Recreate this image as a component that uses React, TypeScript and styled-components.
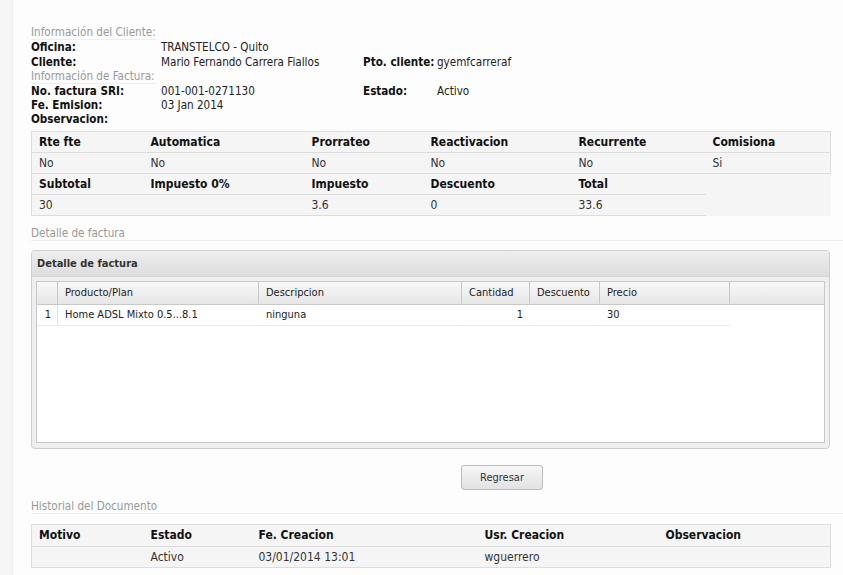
import React from 'react';
import styled, { createGlobalStyle } from 'styled-components';

const GlobalStyle = createGlobalStyle`
  html, body {
    margin: 0;
    padding: 0;
    background: #fdfdfd;
  }
  body {
    font-family: 'DejaVu Sans Condensed', Tahoma, 'DejaVu Sans', sans-serif;
    font-size: 11.6px;
    color: #222;
  }
`;

const Page = styled.div`
  display: flex;
  min-height: 575px;
`;

const SideStrip = styled.div`
  width: 12px;
  flex: none;
  background: #f6f6f6;
  border-right: 1px solid #efefef;
`;

const Content = styled.div`
  flex: 1;
  padding: 25px 0 0 18px;
`;

const SectionLabel = styled.div`
  display: inline-block;
  color: #999;
  line-height: 13.33px;
  border-bottom: 1px solid #eee;
`;

const InfoGrid = styled.div`
  display: grid;
  grid-template-columns: 130px 202px 74px 1fr;
  line-height: 14.2px;
`;

const Label = styled.span`
  font-weight: bold;
  color: #111;
  white-space: nowrap;
`;

const Value = styled.span`
  color: #222;
  white-space: nowrap;
`;

const Legend = styled.div<{ $top: number }>`
  margin-top: ${(p) => p.$top}px;
  color: #999;
  line-height: 14px;
  border-bottom: 1px solid #eee;
`;

const Summary = styled.table`
  width: 799px;
  margin-top: 4px;
  border-collapse: collapse;
  table-layout: fixed;
  background: #f5f5f5;
  border-top: 1px solid #ddd;
  font-size: 12px;
`;

const HeadCell = styled.th<{ $w?: number; $h?: number }>`
  box-sizing: border-box;
  text-align: left;
  font-weight: bold;
  color: #111;
  height: ${(p) => p.$h ?? 21}px;
  padding: 0 0 0 7px;
  white-space: nowrap;
  width: ${(p) => (p.$w ? `${p.$w}px` : 'auto')};
  border-bottom: 1px solid #ddd;
`;

const DataCell = styled.td<{ $bare?: boolean }>`
  box-sizing: border-box;
  color: #333;
  height: 21px;
  padding: 0 0 0 7px;
  border-bottom: ${(p) => (p.$bare ? 'none' : '1px solid #ddd')};
`;

const BorderedRow = styled.tr`
  & > *:first-child {
    border-left: 1px solid #ddd;
  }
  & > *:last-child {
    border-right: 1px solid #ddd;
  }
`;

const LeftRow = styled.tr`
  & > *:first-child {
    border-left: 1px solid #ddd;
  }
`;

const Panel = styled.div`
  width: 797px;
  margin-top: 9px;
  border: 1px solid #cfcfcf;
  border-radius: 4px;
  background: #efefef;
  overflow: hidden;
`;

const PanelHeader = styled.div`
  height: 25px;
  line-height: 25px;
  padding-left: 5px;
  font-weight: bold;
  font-size: 11px;
  color: #333;
  background: linear-gradient(#eeeeee, #dddddd);
  border-bottom: 1px solid #d6d6d6;
`;

const PanelBody = styled.div`
  padding: 4px 4px 5px 4px;
`;

const Grid = styled.div`
  height: 160px;
  background: #fff;
  border: 1px solid #c8c8c8;
  font-size: 11px;
`;

const GridRow = styled.div<{ $head?: boolean }>`
  display: grid;
  grid-template-columns: 21px 201px 203px 68px 70px 130px 1fr;
  height: ${(p) => (p.$head ? '22px' : '21px')};
  line-height: ${(p) => (p.$head ? '22px' : '20px')};
  background: ${(p) => (p.$head ? 'linear-gradient(#f8f8f8, #e6e6e6)' : '#fff')};
  border-bottom: 1px solid ${(p) => (p.$head ? '#c8c8c8' : 'transparent')};
`;

const GridCell = styled.div<{ $right?: boolean; $head?: boolean; $line?: boolean; $sep?: boolean }>`
  padding: 0 6px 0 7px;
  text-align: ${(p) => (p.$right ? 'right' : 'left')};
  color: #222;
  white-space: nowrap;
  overflow: hidden;
  border-right: 1px solid ${(p) => (p.$head ? '#c8c8c8' : p.$sep ? '#e4e4e4' : 'transparent')};
  border-bottom: 1px solid ${(p) => (p.$line ? '#ececec' : 'transparent')};
`;

const ButtonRow = styled.div`
  display: flex;
  padding: 16px 0 0 430px;
`;

const Button = styled.button`
  width: 82px;
  height: 25px;
  font-family: inherit;
  font-size: 11px;
  color: #333;
  border: 1px solid #bbb;
  border-radius: 3px;
  background: linear-gradient(#f6f6f6, #e2e2e2);
`;

const History = styled.table`
  width: 799px;
  margin-top: 10px;
  border-collapse: collapse;
  table-layout: fixed;
  background: #f5f5f5;
  border: 1px solid #ddd;
  font-size: 12px;
`;

const summaryHead = ['Rte fte', 'Automatica', 'Prorrateo', 'Reactivacion', 'Recurrente', 'Comisiona'];
const summaryWidths = [112, 161, 119, 148, 134, 125];
const summaryData = ['No', 'No', 'No', 'No', 'No', 'Si'];
const totalsHead = ['Subtotal', 'Impuesto 0%', 'Impuesto', 'Descuento', 'Total'];
const totalsData = ['30', '', '3.6', '0', '33.6'];

const historyHead = ['Motivo', 'Estado', 'Fe. Creacion', 'Usr. Creacion', 'Observacion'];
const historyWidths = [112, 108, 226, 181, 172];
const historyData = ['', 'Activo', '03/01/2014 13:01', 'wguerrero', ''];

export default function App() {
  return (
    <Page>
      <GlobalStyle />
      <SideStrip />
      <Content>
        <SectionLabel>Información del Cliente:</SectionLabel>
        <InfoGrid>
          <Label>Oficina:</Label>
          <Value>TRANSTELCO - Quito</Value>
          <span />
          <span />
          <Label>Cliente:</Label>
          <Value>Mario Fernando Carrera Fiallos</Value>
          <Label>Pto. cliente:</Label>
          <Value>gyemfcarreraf</Value>
        </InfoGrid>
        <SectionLabel>Información de Factura:</SectionLabel>
        <InfoGrid>
          <Label>No. factura SRI:</Label>
          <Value>001-001-0271130</Value>
          <Label>Estado:</Label>
          <Value>Activo</Value>
          <Label>Fe. Emision:</Label>
          <Value>03 Jan 2014</Value>
          <span />
          <span />
          <Label>Observacion:</Label>
        </InfoGrid>

        <Summary>
          <tbody>
            <BorderedRow>
              {summaryHead.map((h, i) => (
                <HeadCell key={h} $w={summaryWidths[i]}>
                  {h}
                </HeadCell>
              ))}
            </BorderedRow>
            <BorderedRow>
              {summaryData.map((d, i) => (
                <DataCell key={i}>{d}</DataCell>
              ))}
            </BorderedRow>
            <LeftRow>
              {totalsHead.map((h) => (
                <HeadCell key={h}>{h}</HeadCell>
              ))}
              <DataCell $bare />
            </LeftRow>
            <LeftRow>
              {totalsData.map((d, i) => (
                <DataCell key={i}>{d}</DataCell>
              ))}
              <DataCell $bare />
            </LeftRow>
          </tbody>
        </Summary>

        <Legend $top={10}>Detalle de factura</Legend>

        <Panel>
          <PanelHeader>Detalle de factura</PanelHeader>
          <PanelBody>
            <Grid>
              <GridRow $head>
                <GridCell $head />
                <GridCell $head>Producto/Plan</GridCell>
                <GridCell $head>Descripcion</GridCell>
                <GridCell $head>Cantidad</GridCell>
                <GridCell $head>Descuento</GridCell>
                <GridCell $head>Precio</GridCell>
                <GridCell />
              </GridRow>
              <GridRow>
                <GridCell $right $line $sep>
                  1
                </GridCell>
                <GridCell $line>Home ADSL Mixto 0.5...8.1</GridCell>
                <GridCell $line>ninguna</GridCell>
                <GridCell $right $line>
                  1
                </GridCell>
                <GridCell $line />
                <GridCell $line>30</GridCell>
                <GridCell />
              </GridRow>
            </Grid>
          </PanelBody>
        </Panel>

        <ButtonRow>
          <Button>Regresar</Button>
        </ButtonRow>

        <Legend $top={9}>Historial del Documento</Legend>

        <History>
          <tbody>
            <tr>
              {historyHead.map((h, i) => (
                <HeadCell key={h} $w={historyWidths[i]} $h={22}>
                  {h}
                </HeadCell>
              ))}
            </tr>
            <tr>
              {historyData.map((d, i) => (
                <DataCell key={i} $bare>
                  {d}
                </DataCell>
              ))}
            </tr>
          </tbody>
        </History>
      </Content>
    </Page>
  );
}
